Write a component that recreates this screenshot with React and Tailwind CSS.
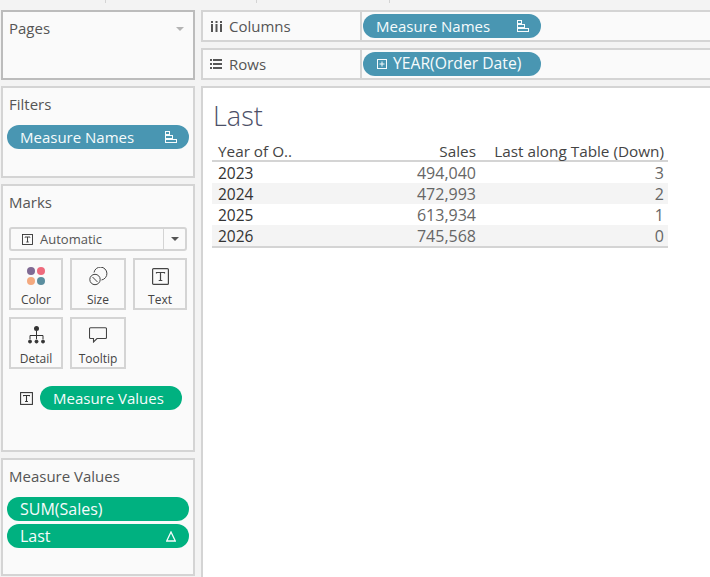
import React from 'react';

const FONT = { fontFamily: '"Open Sans", "Noto Sans", sans-serif' };

const SortIcon = () => (
  <svg width="12" height="12" viewBox="0 0 12 12" fill="none" stroke="currentColor" strokeWidth="1">
    <rect x="0.5" y="0.5" width="4" height="3" />
    <rect x="0.5" y="4.5" width="7" height="3" />
    <rect x="0.5" y="8.5" width="11" height="3" />
  </svg>
);

const TextBox = ({ size = 11 }) => (
  <svg width={size} height={size} viewBox="0 0 11 11" fill="none" stroke="#333" strokeWidth="0.9">
    <rect x="0.5" y="0.5" width="10" height="10" />
    <path d="M3 3.5V3H8V3.5M5.5 3V8M4.3 8H6.7" />
  </svg>
);

const Pill = ({ color = 'bg-[#4996b2]', className = '', children }) => (
  <div className={`h-6 rounded-full ${color} text-[#f6fbfc] flex items-center ${className}`}>
    {children}
  </div>
);

const Panel = ({ title, className = '', children, border = 'border-[#d4d4d4]' }) => (
  <section className={`bg-[#fafafa] border-2 ${border} ${className}`}>
    <h2 className="text-[15px] text-[#555] leading-5 pl-[6px] pt-[6px] pb-[1px]">{title}</h2>
    {children}
  </section>
);

const MarkCard = ({ label, children }) => (
  <div className="h-[52px] border-2 border-[#d4d4d4] flex flex-col items-center">
    <div className="h-[30px] flex items-center justify-center mt-[1px]">{children}</div>
    <span className="text-[12px] leading-4 text-[#444] mt-[1px]">{label}</span>
  </div>
);

const ShelfRow = ({ icon, label, children }) => (
  <div className="h-8 bg-[#fafafa] border-y-2 border-l-2 border-[#d4d4d4] flex">
    <div className="w-[159px] border-r-2 border-[#d4d4d4] flex items-center text-[15px] text-[#555]">
      <span className="w-[26px] flex justify-center">{icon}</span>
      <span className="pt-[1px]">{label}</span>
    </div>
    <div className="pl-[1px] pt-[2px]">{children}</div>
  </div>
);

const rows = [
  ['2023', '494,040', '3'],
  ['2024', '472,993', '2'],
  ['2025', '613,934', '1'],
  ['2026', '745,568', '0'],
];

const App = () => (
  <div className="w-[710px] h-[577px] overflow-hidden bg-[#f3f3f3] relative" style={FONT}>
    {/* toolbar ticks at the very top */}
    <div className="absolute top-0 left-[105px] w-px h-[3px] bg-[#d4d4d4]" />
    <div className="absolute top-0 left-[256px] w-px h-[3px] bg-[#d4d4d4]" />
    <div className="absolute top-0 left-[389px] w-px h-[3px] bg-[#d4d4d4]" />

    <div className="flex gap-[6px] pt-[10px] pl-[1px]">
      {/* left rail */}
      <div className="w-[194px] flex flex-col gap-[6px]">
        <Panel title="Pages" border="border-[#bcbcbc]" className="h-[70px] relative">
          <div className="absolute right-[9px] top-[15px] w-0 h-0 border-x-[4px] border-x-transparent border-t-[4px] border-t-[#b4b4b4]" />
        </Panel>

        <Panel title="Filters" className="h-[92px]">
          <Pill className="mt-[10px] ml-[4px] mr-[4px] pl-[13px] pr-[12px] justify-between text-[15px]">
            Measure Names <SortIcon />
          </Pill>
        </Panel>

        <Panel title="Marks" className="h-[268px]">
          <div className="mt-[14px] ml-[6px] w-[178px] h-6 bg-[#fafafa] border-2 border-[#d4d4d4] rounded-[3px] flex items-center">
            <div className="flex-1 flex items-center pl-[11px] gap-[7px] text-[13px] text-[#555]">
              <TextBox />
              <span className="pt-[1px]">Automatic</span>
            </div>
            <div className="w-[22px] h-full border-l border-[#d4d4d4] flex items-center justify-center">
              <div className="w-0 h-0 border-x-[4px] border-x-transparent border-t-[4px] border-t-[#555]" />
            </div>
          </div>

          <div className="mt-[7px] ml-[6px] grid grid-cols-[54px_56px_54px] gap-x-[7px] gap-y-[7px] w-[178px]">
            <MarkCard label="Color">
              <svg width="18" height="18" viewBox="0 0 18 18">
                <circle cx="4" cy="4" r="4" fill="#7f6a93" />
                <circle cx="14" cy="4" r="4" fill="#ee6a7c" />
                <circle cx="4" cy="14" r="4" fill="#f4a97f" />
                <circle cx="14" cy="14" r="4" fill="#5b8e9f" />
              </svg>
            </MarkCard>
            <MarkCard label="Size">
              <svg width="19" height="19" viewBox="0 0 19 19" fill="none" stroke="#444" strokeWidth="1">
                <path d="M5 5.5A6.5 6.5 0 1 1 12.5 13" />
                <circle cx="6" cy="12.5" r="5.2" />
                <path d="M3.5 10L8.5 15" />
              </svg>
            </MarkCard>
            <MarkCard label="Text">
              <svg width="17" height="17" viewBox="0 0 17 17" fill="none" stroke="#444" strokeWidth="1.2">
                <rect x="0.6" y="0.6" width="15.8" height="15.8" rx="1" />
                <path d="M4.5 5.5V4.5H12.5V5.5M8.5 4.5V12.5M6.7 12.5H10.3" />
              </svg>
            </MarkCard>
            <MarkCard label="Detail">
              <svg width="17" height="18" viewBox="0 0 17 18" fill="none" stroke="#333" strokeWidth="1">
                <circle cx="8.5" cy="2.5" r="2.5" fill="#333" stroke="none" />
                <path d="M8.5 5V13M2 13V9.5H15V13" />
                <circle cx="2" cy="15.5" r="1.5" fill="#333" />
                <circle cx="8.5" cy="15.5" r="1.5" fill="#333" />
                <circle cx="15" cy="15.5" r="1.5" fill="#333" />
              </svg>
            </MarkCard>
            <MarkCard label="Tooltip">
              <svg width="18" height="16" viewBox="0 0 18 16" fill="none" stroke="#444" strokeWidth="1.1">
                <path d="M1.5 0.8H16.5A1 1 0 0 1 17.5 1.8V10.5A1 1 0 0 1 16.5 11.5H8L4.5 15V11.5H1.5A1 1 0 0 1 0.5 10.5V1.8A1 1 0 0 1 1.5 0.8Z" />
              </svg>
            </MarkCard>
          </div>

          <div className="mt-[17px] ml-[17px] flex items-center gap-[7px]">
            <TextBox size={13} />
            <Pill color="bg-[#00b180]" className="w-[142px] pl-[13px] text-[15px]">Measure Values</Pill>
          </div>
        </Panel>

        <Panel title="Measure Values" className="h-[118px]">
          <div className="mt-[10px] ml-[4px] mr-[4px] flex flex-col gap-[3px]">
            <Pill color="bg-[#00b180]" className="pl-[13px] text-[16px]">SUM(Sales)</Pill>
            <Pill color="bg-[#00b180]" className="pl-[13px] pr-[13px] justify-between text-[16px]">
              Last
              <svg width="10" height="11" viewBox="0 0 10 11" fill="none" stroke="currentColor" strokeWidth="1.3">
                <path d="M5 1L9.3 10H0.7Z" />
              </svg>
            </Pill>
          </div>
        </Panel>
      </div>

      {/* worksheet */}
      <div className="flex-1 flex flex-col gap-[6px]">
        <ShelfRow
          label="Columns"
          icon={
            <svg width="11" height="11" viewBox="0 0 11 11" fill="#555">
              <rect x="0" y="0" width="2" height="2" />
              <rect x="0" y="3" width="2" height="8" />
              <rect x="4.5" y="0" width="2" height="2" />
              <rect x="4.5" y="3" width="2" height="8" />
              <rect x="9" y="0" width="2" height="2" />
              <rect x="9" y="3" width="2" height="8" />
            </svg>
          }
        >
          <Pill className="w-[178px] pl-[13px] pr-[12px] justify-between text-[15px]">
            Measure Names <SortIcon />
          </Pill>
        </ShelfRow>

        <ShelfRow
          label="Rows"
          icon={
            <svg width="12" height="11" viewBox="0 0 12 11" fill="#555">
              <rect x="0" y="0" width="2" height="2" />
              <rect x="3" y="0" width="9" height="2" />
              <rect x="0" y="4" width="2" height="2" />
              <rect x="3" y="4" width="9" height="2" />
              <rect x="0" y="8" width="2" height="2" />
              <rect x="3" y="8" width="9" height="2" />
            </svg>
          }
        >
          <Pill className="w-[178px] pl-[14px] gap-[6px] text-[15.7px]">
            <svg width="10" height="10" viewBox="0 0 10 10" fill="none" stroke="currentColor" strokeWidth="1">
              <rect x="0.5" y="0.5" width="9" height="9" />
              <path d="M2.5 5H7.5M5 2.5V7.5" />
            </svg>
            YEAR(Order Date)
          </Pill>
        </ShelfRow>

        <main className="h-[491px] bg-white border-l-2 border-t-2 border-[#d4d4d4] pl-[9px] pt-[12px]">
          <h1 className="text-[27px] leading-8 font-light text-[#4c5068] pl-[1px]">Last</h1>

          <table className="mt-[6px] w-[456px] border-collapse text-[15.3px] leading-[18px]">
            <thead>
              <tr className="border-b-2 border-[#d4d4d4] text-[#444] h-[23px]">
                <th className="font-normal text-left align-bottom pl-[6px] w-[100px]">Year of O..</th>
                <th className="font-normal text-right align-bottom w-[164px]">Sales</th>
                <th className="font-normal text-right align-bottom pr-[4px]">Last along Table (Down)</th>
              </tr>
            </thead>
            <tbody>
              {rows.map(([year, sales, last], i) => (
                <tr key={year} className={`${i === 3 ? 'h-[22px] border-b-2 border-[#d4d4d4]' : i === 0 ? 'h-[22px]' : 'h-[21px]'} ${i % 2 === 1 ? 'bg-[#f4f4f4]' : 'bg-white'}`}>
                  <td className="pl-[6px] text-[#333] text-[15.5px]">{year}</td>
                  <td className="text-right text-[#666] text-[16px]">{sales}</td>
                  <td className="text-right pr-[4px] text-[#666] text-[16px]">{last}</td>
                </tr>
              ))}
            </tbody>
          </table>
        </main>
      </div>
    </div>
  </div>
);

export default App;
